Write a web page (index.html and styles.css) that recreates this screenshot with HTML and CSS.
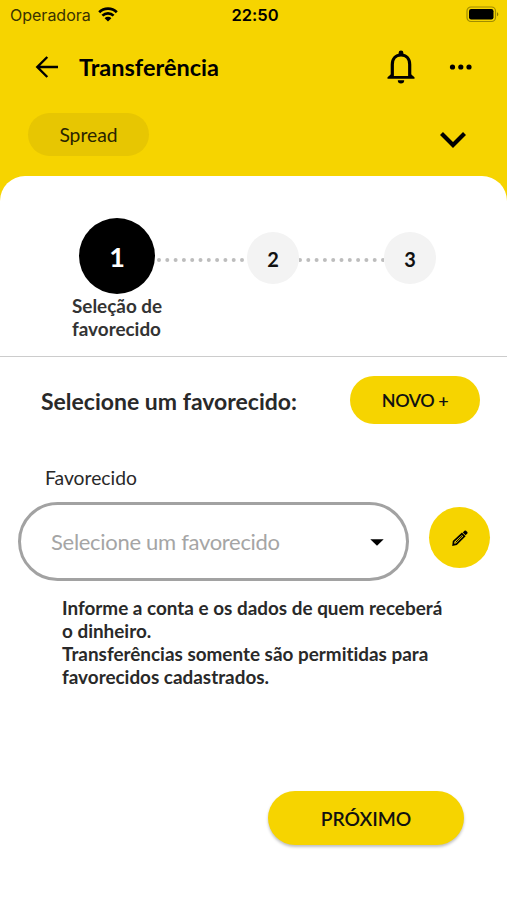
FILE: index.html
```html
<!DOCTYPE html>
<html lang="pt-BR">
<head>
  <meta charset="UTF-8">
  <meta name="viewport" content="width=device-width, initial-scale=1.0">
  <title>Transferência</title>
  <link rel="stylesheet" href="styles.css">
</head>
<body>
  <header class="header">
    <div class="status-bar">
      <div class="carrier">
        <span>Operadora</span>
        <svg class="wifi" width="20" height="15" viewBox="0 0 20 15">
          <path d="M1.200 5.300a12.400 12.400 0 0 1 17.600 0M4.400 8.600a8 8 0 0 1 11.200 0" fill="none" stroke="#000" stroke-width="2.700"/>
          <path d="M10 14.600l-3.400-3.400a4.800 4.800 0 0 1 6.800 0z"/>
        </svg>
      </div>
      <span class="time">22:50</span>
      <svg class="battery" width="34" height="17" viewBox="0 0 34 17">
        <rect x="1" y="1" width="28.500" height="14.500" rx="4" fill="none" stroke="#a08c00" stroke-width="1.200"/>
        <rect x="3" y="3" width="24.500" height="10.500" rx="2.200"/>
        <path d="M31 6.200c1.800.6 1.800 3.400 0 4z" fill="#8d7a00"/>
      </svg>
    </div>

    <div class="title-bar">
      <svg class="back" width="24" height="24" viewBox="0 0 24 24">
        <path d="M23 12H2.500M12.300 2L2.300 12l10 10" fill="none" stroke="#000" stroke-width="2.400"/>
      </svg>
      <h1 class="title">Transferência</h1>
      <svg class="bell" width="28" height="34" viewBox="0 0 28 34">
        <path d="M5.300 26V14.500C5.300 8.500 8.800 5 14 5s8.700 3.500 8.700 9.500V26" fill="none" stroke="#000" stroke-width="3.200"/>
        <path d="M11.600 4.500V3a2.400 2.400 0 0 1 4.800 0v1.500zM.5 28.700v-1.500L4 24.300V26h20v-1.700l3.500 2.900v1.500zM10.800 30.300h6.400a3.200 3.200 0 0 1-6.400 0z"/>
      </svg>
      <svg class="more" width="24" height="6" viewBox="0 0 24 6">
        <circle cx="3.500" cy="3" r="2.600"/>
        <circle cx="11.800" cy="3" r="2.600"/>
        <circle cx="20" cy="3" r="2.600"/>
      </svg>
    </div>

    <div class="account-bar">
      <span class="chip">Spread</span>
      <svg class="chevron" width="28" height="18" viewBox="0 0 28 18">
        <path d="M2.500 2.500L14 14l11.500-11.500" fill="none" stroke="#000" stroke-width="4.200"/>
      </svg>
    </div>
  </header>

  <main class="sheet">
    <section class="stepper">
      <div class="steps">
        <div class="step active">1</div>
        <svg class="dots" width="92" height="6" viewBox="0 0 92 6">
          <path d="M4 3h84"/>
        </svg>
        <div class="step">2</div>
        <svg class="dots" width="85" height="6" viewBox="0 0 85 6">
          <path d="M1 3h84"/>
        </svg>
        <div class="step">3</div>
      </div>
      <p class="step-label">Seleção de favorecido</p>
    </section>

    <section class="content">
      <div class="heading-row">
        <h2 class="heading">Selecione um favorecido:</h2>
        <button class="btn btn-new">NOVO +</button>
      </div>

      <div class="label">Favorecido</div>
      <div class="field-row">
        <div class="select">
          <span>Selecione um favorecido</span>
          <svg class="caret" width="14" height="7" viewBox="0 0 14 7">
            <path d="M.3.300h13.400L7 6.800z"/>
          </svg>
        </div>
        <button class="btn btn-edit" aria-label="Editar">
          <svg width="16" height="16" viewBox="0 0 16 16">
            <path d="M1.200 14.800l.4-3.400 8.300-7.600 2.500 2.500-8 7.800z" fill="none" stroke="#000" stroke-width="1.700"/>
            <path d="M10.800 2.500L12.500.8q.8-.7 1.600 0l1.200 1.200q.7.8 0 1.600l-1.700 1.700z"/>
            <path d="M3.700 12.300l6.400-6.200" stroke="#000" stroke-width="1"/>
          </svg>
        </button>
      </div>

      <p class="info">Informe a conta e os dados de quem receberá o dinheiro.<br>Transferências somente são permitidas para favorecidos cadastrados.</p>

      <button class="btn btn-next">PRÓXIMO</button>
    </section>
  </main>
</body>
</html>
```

FILE: styles.css
```css
* {
  box-sizing: border-box;
}
body {
  margin: 0;
  height: 900px;
  overflow: hidden;
  background: #f6d400;
  color: #000;
  font-family: Lato, sans-serif;
  font-variant-ligatures: none;
  display: flex;
  flex-direction: column;
}
svg {
  display: block;
  flex: none;
}
h1, h2, p {
  margin: 0;
}
.header {
  height: 176px;
  flex: none;
}
.status-bar {
  display: grid;
  grid-template-columns: 1fr auto 1fr;
  align-items: center;
  height: 29px;
  padding: 0 7px 0 10px;
  font-family: Inter, sans-serif;
  font-size: 16px;
}
.carrier {
  display: flex;
  align-items: center;
  gap: 7px;
  color: #3a3200;
}
.time {
  font-weight: 600;
  font-size: 16.500px;
}
.battery {
  justify-self: end;
}
.title-bar {
  display: flex;
  align-items: center;
  height: 76px;
  padding: 0 34px 0 35px;
}
.title {
  margin-left: 20px;
  flex: 1;
  font-size: 23.500px;
  font-weight: 700;
}
.more {
  margin-left: 34px;
}
.account-bar {
  display: flex;
  align-items: center;
  justify-content: space-between;
  margin-top: 8px;
  padding: 0 40px 0 28px;
}
.chip {
  width: 121px;
  height: 43px;
  border-radius: 22px;
  background: #e7c602;
  color: #2a2400;
  font-size: 19.300px;
  line-height: 43px;
  text-align: center;
}
.chevron {
  margin-top: 11px;
}
.sheet {
  flex: 1;
  background: #fff;
  border-radius: 25px 25px 0 0;
}
.stepper {
  height: 181px;
  padding: 42px 71px 0;
  border-bottom: 1px solid #ccc;
}
.steps {
  display: flex;
  align-items: center;
  padding-left: 8px;
}
.step {
  width: 52px;
  height: 52px;
  margin-top: 4px;
  border-radius: 50%;
  background: #f3f3f3;
  color: #111;
  font-size: 20px;
  font-weight: 700;
  line-height: 54px;
  text-align: center;
  flex: none;
}
.step.active {
  width: 76px;
  height: 76px;
  margin-top: 0;
  background: #000;
  color: #fff;
  font-size: 27px;
  line-height: 77px;
}
.dots {
  margin-top: 8px;
}
.dots path {
  fill: none;
  stroke: #bdbdbd;
  stroke-width: 4;
  stroke-linecap: round;
  stroke-dasharray: 0 8.300;
}
.step-label {
  width: 110px;
  padding-left: 1px;
  color: #333;
  font-size: 18.900px;
  font-weight: 700;
  line-height: 23px;
}
.content {
  padding: 19px 17px 0 18px;
}
.btn {
  border: none;
  background: #f6d400;
  color: #111;
  padding: 0;
  font-family: inherit;
  font-weight: 600;
  cursor: pointer;
}
.heading-row {
  display: flex;
  align-items: center;
  justify-content: space-between;
  padding: 0 10px 0 23px;
}
.heading {
  padding-top: 1px;
  color: #292929;
  font-size: 23px;
  font-weight: 700;
}
.btn-new {
  width: 130px;
  height: 48px;
  border-radius: 24px;
  font-size: 18px;
  letter-spacing: -0.5px;
}
.label {
  margin-top: 42px;
  padding-left: 27px;
  color: #292929;
  font-size: 19.300px;
  line-height: 23px;
}
.field-row {
  display: flex;
  gap: 20px;
  margin-top: 13px;
}
.select {
  display: flex;
  align-items: center;
  justify-content: space-between;
  width: 391px;
  height: 79px;
  padding: 0 22px 0 30px;
  border: 3px solid #a2a2a2;
  border-radius: 40px;
  color: #a5a5a5;
  font-size: 22px;
  letter-spacing: -0.3px;
}
.caret {
  margin-top: 2px;
}
.btn-edit {
  display: flex;
  align-items: center;
  justify-content: center;
  width: 61px;
  height: 61px;
  margin-top: 5px;
  border-radius: 50%;
}
.info {
  width: 430px;
  margin-top: 15px;
  padding-left: 44px;
  color: #292929;
  font-size: 18.900px;
  font-weight: 700;
  line-height: 23px;
}
.btn-next {
  display: block;
  width: 196px;
  height: 54px;
  margin: 103px 26px 0 auto;
  border-radius: 27px;
  box-shadow: 0 2px 3px rgba(0, 0, 0, 0.25);
  font-size: 19.300px;
}
```
